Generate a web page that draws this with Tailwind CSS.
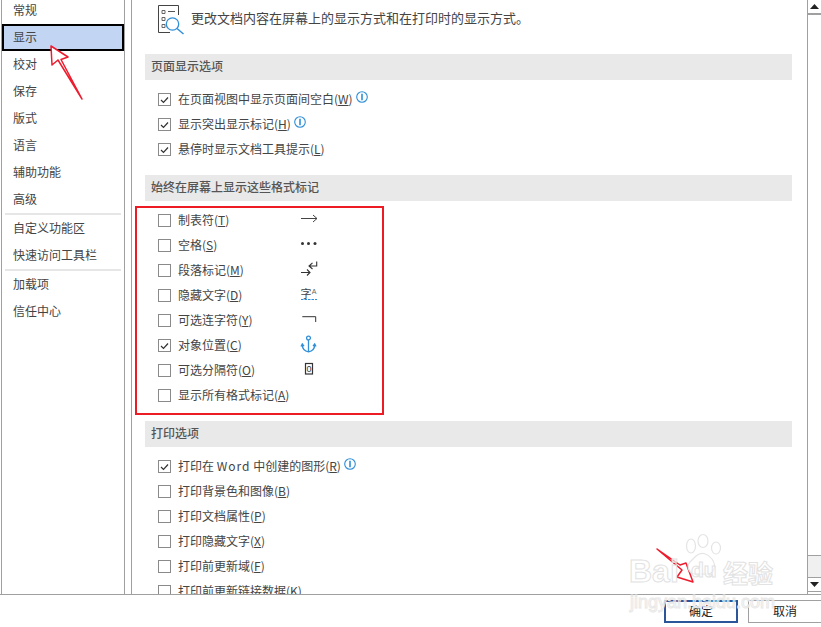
<!DOCTYPE html>
<html lang="zh">
<head>
<meta charset="utf-8">
<script src="https://cdn.jsdelivr.net/npm/@tailwindcss/browser@4"></script>
</head>
<body class="bg-white">
<div class="relative w-[821px] h-[627px] overflow-hidden bg-white text-[12px] leading-none text-[#444] font-['Noto_Sans_CJK_SC','Noto_Sans',sans-serif]">
  <div class="flex h-[595px] border-b border-[#a0a0a0]">
    <nav class="ml-px w-[124px] border-x border-[#a0a0a0] overflow-hidden">
      <ul class="-mt-[3px]">
        <li class="h-[27px] flex items-center pl-[11px] pb-[2px]">常规</li>
        <li class="h-[27px] flex items-center pl-[9px] pb-[1px] bg-[#c2d5f2] border-2 border-black">显示</li>
        <li class="h-[27px] flex items-center pl-[11px] pb-[2px]">校对</li>
        <li class="h-[27px] flex items-center pl-[11px] pb-[2px]">保存</li>
        <li class="h-[27px] flex items-center pl-[11px] pb-[2px]">版式</li>
        <li class="h-[27px] flex items-center pl-[11px] pb-[2px]">语言</li>
        <li class="h-[27px] flex items-center pl-[11px] pb-[2px]">辅助功能</li>
        <li class="h-[27px] flex items-center pl-[11px] pb-[2px]">高级</li>
        <li class="h-[2px] mx-[3px] bg-[#e6e6e6]"></li>
        <li class="h-[27px] flex items-center pl-[11px] pb-[2px]">自定义功能区</li>
        <li class="h-[27px] flex items-center pl-[11px] pb-[2px]">快速访问工具栏</li>
        <li class="h-[2px] mx-[3px] bg-[#e6e6e6]"></li>
        <li class="h-[27px] flex items-center pl-[11px] pb-[2px]">加载项</li>
        <li class="h-[27px] flex items-center pl-[11px] pb-[2px]">信任中心</li>
      </ul>
    </nav>
    <main class="ml-[6px] flex-1 flex border-l border-[#a0a0a0] min-w-0">
      <div class="flex-1 pl-[13px] pr-[15px] overflow-hidden">
        <header class="flex h-[54px] pl-[12px] pt-[4px]">
          <svg class="w-[30px] h-[32px] shrink-0" viewBox="0 0 30 32" fill="none">
            <path d="M21.500 11V1.500H1.500V28.500H13" stroke="#444"/>
            <path d="M5 6.500h3v3h-3zM5 13.500h3v3h-3zM5 20.500h3v3h-3z" stroke="#666"/>
            <path d="M11 7.500h7" stroke="#555"/>
            <circle cx="15.500" cy="20" r="6.200" stroke="#2f8fd8" stroke-width="1.300"/>
            <path d="M20 24.500l6.500 5.500" stroke="#2f8fd8" stroke-width="1.500"/>
          </svg>
          <p class="ml-[4px] mt-[6px] text-[13px] leading-[16px]">更改文档内容在屏幕上的显示方式和在打印时的显示方式。</p>
        </header>

        <h2 class="h-[26px] flex items-center pl-[6px] pb-[3px] bg-[#e9e9e9] font-medium text-[#555]">页面显示选项</h2>
        <div class="mt-[7px]">
          <label class="h-[25px] flex items-center pl-[13px]"><span class="w-[13px] h-[13px] border border-[#8a8a8a] flex items-center justify-center"><svg class="w-[9px] h-[8px]" viewBox="0 0 9 8" fill="none"><path d="M1 4l2.500 2.500L8 1.500" stroke="#333" stroke-width="1.200"/></svg></span><span class="ml-[7px] -mt-[2px]">在页面视图中显示页面间空白(<u>W</u>)</span><svg class="w-[12px] h-[12px] ml-[3px] mb-[6px]" viewBox="0 0 12 12" fill="none"><circle cx="6" cy="6" r="5.300" stroke="#2f8fd8" stroke-width="1.100"/><path d="M6 2.800v6.400" stroke="#2f8fd8" stroke-width="1.600"/></svg></label>
          <label class="h-[25px] flex items-center pl-[13px]"><span class="w-[13px] h-[13px] border border-[#8a8a8a] flex items-center justify-center"><svg class="w-[9px] h-[8px]" viewBox="0 0 9 8" fill="none"><path d="M1 4l2.500 2.500L8 1.500" stroke="#333" stroke-width="1.200"/></svg></span><span class="ml-[7px] -mt-[2px]">显示突出显示标记(<u>H</u>)</span><svg class="w-[12px] h-[12px] ml-[3px] mb-[6px]" viewBox="0 0 12 12" fill="none"><circle cx="6" cy="6" r="5.300" stroke="#2f8fd8" stroke-width="1.100"/><path d="M6 2.800v6.400" stroke="#2f8fd8" stroke-width="1.600"/></svg></label>
          <label class="h-[25px] flex items-center pl-[13px]"><span class="w-[13px] h-[13px] border border-[#8a8a8a] flex items-center justify-center"><svg class="w-[9px] h-[8px]" viewBox="0 0 9 8" fill="none"><path d="M1 4l2.500 2.500L8 1.500" stroke="#333" stroke-width="1.200"/></svg></span><span class="ml-[7px] -mt-[2px]">悬停时显示文档工具提示(<u>L</u>)</span></label>
        </div>

        <h2 class="mt-[13px] h-[26px] flex items-center pl-[6px] pb-[3px] bg-[#e9e9e9] font-medium text-[#555]">始终在屏幕上显示这些格式标记</h2>
        <div class="mt-[7px]">
          <label class="h-[25px] flex items-center pl-[13px]"><span class="w-[13px] h-[13px] border border-[#8a8a8a]"></span><span class="ml-[7px] -mt-[2px] w-[122px]">制表符(<u>T</u>)</span>
            <svg class="w-[20px] h-[25px]" viewBox="0 0 20 25" fill="none" stroke="#444"><path d="M1 10.500h16M13 7l4 3.500-4 3.500"/></svg></label>
          <label class="h-[25px] flex items-center pl-[13px]"><span class="w-[13px] h-[13px] border border-[#8a8a8a]"></span><span class="ml-[7px] -mt-[2px] w-[122px]">空格(<u>S</u>)</span>
            <svg class="w-[20px] h-[25px]" viewBox="0 0 20 25" fill="#333"><circle cx="2.500" cy="10.400" r="1.500"/><circle cx="8.500" cy="10.400" r="1.500"/><circle cx="15" cy="10.400" r="1.500"/></svg></label>
          <label class="h-[25px] flex items-center pl-[13px]"><span class="w-[13px] h-[13px] border border-[#8a8a8a]"></span><span class="ml-[7px] -mt-[2px] w-[122px]">段落标记(<u>M</u>)</span>
            <svg class="w-[20px] h-[25px]" viewBox="0 0 20 25" fill="none" stroke="#333" stroke-width="1.100"><path d="M1 14.500h9M7 11.500l3 3-3 3M16.700 3.500V8H9M12.500 4.800L9 8l3.500 3"/></svg></label>
          <label class="h-[25px] flex items-center pl-[13px]"><span class="w-[13px] h-[13px] border border-[#8a8a8a]"></span><span class="ml-[7px] -mt-[2px] w-[122px]">隐藏文字(<u>D</u>)</span>
            <svg class="w-[20px] h-[25px]" viewBox="0 0 20 25" fill="none"><text x="0.500" y="14.500" font-size="11" fill="#444" font-family="Noto Sans CJK SC">字</text><text x="11.800" y="10.500" font-size="7" fill="#666" font-family="Liberation Sans">A</text><path d="M1 16.500h16" stroke="#2f8fd8" stroke-dasharray="2.500 1"/></svg></label>
          <label class="h-[25px] flex items-center pl-[13px]"><span class="w-[13px] h-[13px] border border-[#8a8a8a]"></span><span class="ml-[7px] -mt-[2px] w-[122px]">可选连字符(<u>Y</u>)</span>
            <svg class="w-[20px] h-[25px]" viewBox="0 0 20 25" fill="none" stroke="#333"><path d="M2.300 8.700h13.400V14"/></svg></label>
          <label class="h-[25px] flex items-center pl-[13px]"><span class="w-[13px] h-[13px] border border-[#8a8a8a] flex items-center justify-center"><svg class="w-[9px] h-[8px]" viewBox="0 0 9 8" fill="none"><path d="M1 4l2.500 2.500L8 1.500" stroke="#333" stroke-width="1.200"/></svg></span><span class="ml-[7px] -mt-[2px] w-[122px]">对象位置(<u>C</u>)</span>
            <svg class="w-[20px] h-[25px]" viewBox="0 0 20 25" fill="none" stroke="#2f8fd8" stroke-width="1.300"><circle cx="8.500" cy="5" r="1.900"/><path d="M8.500 7v12M2.300 11.500c0 4.500 3 6.800 6.200 7.300 3.200-.5 6.200-2.800 6.200-7.300M1 13.500l1.300-2.500 1.700 2.200M13 13.200l1.700-2.200 1.300 2.500"/></svg></label>
          <label class="h-[25px] flex items-center pl-[13px]"><span class="w-[13px] h-[13px] border border-[#8a8a8a]"></span><span class="ml-[7px] -mt-[2px] w-[122px]">可选分隔符(<u>O</u>)</span>
            <svg class="w-[20px] h-[25px]" viewBox="0 0 20 25" fill="none"><rect x="5.500" y="5.500" width="7" height="10.500" stroke="#333" stroke-width="1.200"/><text x="6.500" y="14.200" font-size="9" fill="#333" font-family="Liberation Sans">0</text></svg></label>
          <label class="h-[25px] flex items-center pl-[13px]"><span class="w-[13px] h-[13px] border border-[#8a8a8a]"></span><span class="ml-[7px] -mt-[2px]">显示所有格式标记(<u>A</u>)</span></label>
        </div>

        <h2 class="mt-[13px] h-[26px] flex items-center pl-[6px] pb-[3px] bg-[#e9e9e9] font-medium text-[#555]">打印选项</h2>
        <div class="mt-[7px]">
          <label class="h-[25px] flex items-center pl-[13px]"><span class="w-[13px] h-[13px] border border-[#8a8a8a] flex items-center justify-center"><svg class="w-[9px] h-[8px]" viewBox="0 0 9 8" fill="none"><path d="M1 4l2.500 2.500L8 1.500" stroke="#333" stroke-width="1.200"/></svg></span><span class="ml-[7px] -mt-[2px]">打印在 <span class="tracking-[1px]">Word</span> 中创建的图形(<u>R</u>)</span><svg class="w-[12px] h-[12px] ml-[3px] mb-[6px]" viewBox="0 0 12 12" fill="none"><circle cx="6" cy="6" r="5.300" stroke="#2f8fd8" stroke-width="1.100"/><path d="M6 2.800v6.400" stroke="#2f8fd8" stroke-width="1.600"/></svg></label>
          <label class="h-[25px] flex items-center pl-[13px]"><span class="w-[13px] h-[13px] border border-[#8a8a8a]"></span><span class="ml-[7px] -mt-[2px]">打印背景色和图像(<u>B</u>)</span></label>
          <label class="h-[25px] flex items-center pl-[13px]"><span class="w-[13px] h-[13px] border border-[#8a8a8a]"></span><span class="ml-[7px] -mt-[2px]">打印文档属性(<u>P</u>)</span></label>
          <label class="h-[25px] flex items-center pl-[13px]"><span class="w-[13px] h-[13px] border border-[#8a8a8a]"></span><span class="ml-[7px] -mt-[2px]">打印隐藏文字(<u>X</u>)</span></label>
          <label class="h-[25px] flex items-center pl-[13px]"><span class="w-[13px] h-[13px] border border-[#8a8a8a]"></span><span class="ml-[7px] -mt-[2px]">打印前更新域(<u>F</u>)</span></label>
          <label class="h-[25px] flex items-center pl-[13px]"><span class="w-[13px] h-[13px] border border-[#8a8a8a]"></span><span class="ml-[7px] -mt-[2px]">打印前更新链接数据(<u>K</u>)</span></label>
        </div>
      </div>

      <div class="w-[15px] shrink-0 flex flex-col border-x border-[#a0a0a0] -mr-px">
        <div class="h-[13px] flex items-center justify-center"><svg class="w-[9px] h-[5px]" viewBox="0 0 9 5"><path d="M4.500 0L9 5H0z" fill="#222"/></svg></div>
        <div class="h-[543px] border-y border-[#a0a0a0] border-t-2"></div>
        <div class="flex-1 bg-[#f0f0f0]"></div>
        <div class="h-[15px] -mx-px border border-[#a0a0a0] flex items-center justify-center bg-white"><svg class="w-[9px] h-[5px]" viewBox="0 0 9 5"><path d="M0 0h9L4.500 5z" fill="#222"/></svg></div>
        <div class="h-[2px] bg-white"></div>
      </div>
    </main>
  </div>

  <footer class="flex justify-end gap-[10px] pt-[5px] -mr-px text-[#222]">
    <button class="w-[74px] h-[23px] pb-[2px] border-2 border-[#2b579a] flex items-center justify-center">确定</button>
    <button class="w-[74px] h-[23px] pb-[2px] border border-[#a0a0a0] flex items-center justify-center">取消</button>
  </footer>

  <!-- annotations -->
  <div class="absolute left-[135px] top-[206px] w-[249px] h-[209px] border-2 border-[#ed1c24]"></div>
  <svg class="absolute left-0 top-0 w-[821px] h-[627px] pointer-events-none" viewBox="0 0 821 627" fill="none">
    <path d="M51 46L68 57 61 59.500 82 99 58 60 52 65Z" fill="#fff" stroke="#ed1c2e" stroke-width="1.500" stroke-linejoin="round"/>
    <path d="M657 549L680 565 686 563 693 582 677 577 682 570Z" fill="#fff" stroke="#ed1c2e" stroke-width="1.500" stroke-linejoin="round"/>
    <g fill="#fff" fill-opacity="0.6" stroke="#e4e4e4" stroke-width="1.200">
      <ellipse cx="691" cy="546" rx="4.500" ry="7"/>
      <ellipse cx="703" cy="541" rx="5" ry="6.500"/>
      <ellipse cx="716" cy="548" rx="4.500" ry="6"/>
      <path d="M696 556c6-5 12-2 16 3 5 7 2 15-5 15h-11c-7 0-10-7-6-12z"/>
    </g>
  </svg>
  <div class="absolute left-[629px] top-[555px] text-[32px] leading-[32px] font-bold text-white/60 [-webkit-text-stroke:1px_#e2e2e2] font-['Liberation_Sans',sans-serif]">Bai</div>
  <div class="absolute left-[691px] top-[558px] text-[21px] leading-[24px] font-bold text-white/60 [-webkit-text-stroke:1px_#e2e2e2] font-['Liberation_Sans',sans-serif]">du</div>
  <div class="absolute left-[723px] top-[558px] text-[25px] leading-[28px] font-bold text-white/60 [-webkit-text-stroke:1px_#e2e2e2]">经验</div>
  <div class="absolute left-[630px] top-[592px] text-[18px] leading-[20px] text-white/30 [-webkit-text-stroke:1px_#e8e8e8] font-['Liberation_Sans',sans-serif]">jingyan.baidu.com</div>
</div>
</body>
</html>
